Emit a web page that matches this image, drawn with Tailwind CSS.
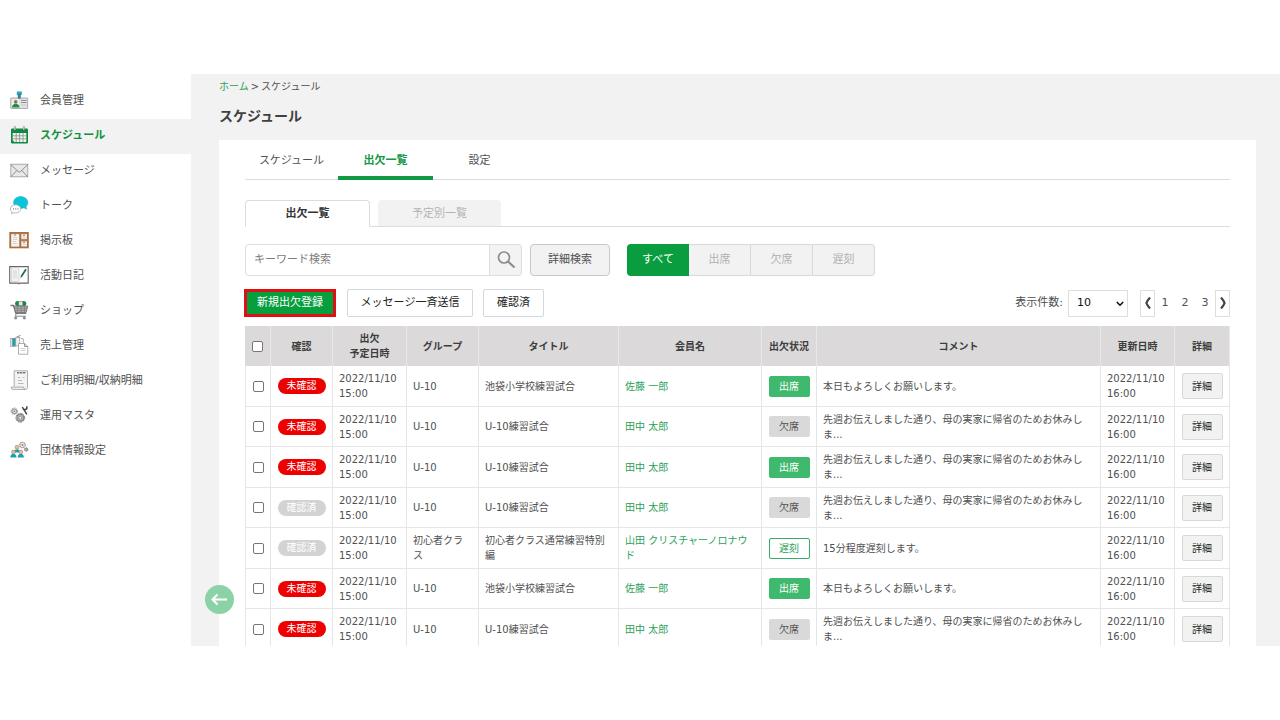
<!DOCTYPE html>
<html lang="ja">
<head>
    <meta charset="UTF-8">
    <meta name="viewport" content="width=device-width, initial-scale=1">
    <title>スケジュール</title>
    <script src="https://cdn.jsdelivr.net/npm/@tailwindcss/browser@4"></script>
    <style>
        body {
            font-family: 'DejaVu Sans', 'Noto Sans CJK JP', sans-serif;
        }
    </style>
</head>
<body class="bg-white text-[#505050]">

<div class="flex h-screen overflow-hidden py-[74px]">

    <!-- Sidebar -->
    <nav class="w-[191px] shrink-0 pt-[10px] text-[11px] [&_svg]:mb-1">
        <a href="#" class="flex h-[35px] items-center gap-[11px] pl-[9px]">
            <svg class="size-5" viewBox="0 0 20 20">
                <rect x="1.7" y="8" width="17" height="10.5" rx=".6" fill="#e2e2e2" stroke="#999" stroke-width=".8"/>
                <rect x="3.2" y="9.5" width="7" height="8" fill="#f6f1e4"/>
                <circle cx="6.7" cy="11.800" r="1.9" fill="#8b7660"/>
                <path d="M3 17.500c0-5 7.500-5 7.500 0z" fill="#14904a"/>
                <path d="M12 10.5h5.500M12 12.500h5.500" stroke="#888" stroke-width=".9"/>
                <path d="M12 15h5.500" stroke="#bbb" stroke-width=".7"/>
                <rect x="7.800" y="1.500" width="5" height="3.500" fill="#22a7c0"/>
                <rect x="8.800" y="4" width="3" height="4.600" fill="#3b7d9a"/>
            </svg>
            会員管理
        </a>
        <a href="#" class="flex h-[35px] items-center gap-[11px] bg-[#f2f2f2] pl-[9px] font-bold text-[#0b9140]">
            <svg class="size-5" viewBox="0 0 20 20">
                <rect x="2" y="3.500" width="17" height="15" rx="1.2" fill="#0f8a43"/>
                <path d="M5.800 1.500v3.500M14.800 1.500v3.500" stroke="#777" stroke-width="1.800"/>
                <path d="M5.800 2v3M14.800 2v3" stroke="#fff" stroke-width=".7"/>
                <path d="M3.700 8h13.600v9H5.500l-1.800-1.800z" fill="#f3f3f3"/>
                <path d="M3.700 10.800h13.600M3.700 13.800h13.600M7.200 8v9M10.600 8v9M14 8v9" stroke="#7c8f84" stroke-width=".8"/>
            </svg>
            スケジュール
        </a>
        <a href="#" class="flex h-[35px] items-center gap-[11px] pl-[9px]">
            <svg class="size-5" viewBox="0 0 20 20" fill="none" stroke="#999" stroke-width=".8">
                <rect x="1.8" y="4.2" width="17" height="12.6" fill="#e8e8e8"/>
                <path d="M1.8 4.5l7.2 7q1.3 1 2.6 0l7.2-7M2 16.7l5.8-6.3M18.6 16.7l-5.8-6.3" stroke="#777"/>
            </svg>
            メッセージ
        </a>
        <a href="#" class="flex h-[35px] items-center gap-[11px] pl-[9px]">
            <svg class="size-5" viewBox="0 0 20 20">
                <path d="M11.7 1.500c4 0 7.200 2.600 7.200 6 0 1.800-.8 3.200-1.800 4.200l.8 2.500-3-1.200c-5 1.600-10.400-1-10.400-5.500 0-3.400 3.200-6 7.200-6z" fill="#08c5dc" stroke="#3aa4b4" stroke-width=".4"/>
                <path d="M6.500 9.800c3 0 5.300 1.800 5.300 4.100s-2.300 4.100-5.300 4.100c-.700 0-1.300-.1-1.900-.3l-2 1.100.4-2c-1-.8-1.600-1.700-1.600-2.900 0-2.300 2.200-4.100 5.100-4.100z" fill="#fff" stroke="#999" stroke-width=".7"/>
                <path d="M4 13.900h1M6.200 13.900h1M8.400 13.900h1" stroke="#666" stroke-width="1"/>
            </svg>
            トーク
        </a>
        <a href="#" class="flex h-[35px] items-center gap-[11px] pl-[9px]">
            <svg class="size-5" viewBox="0 0 20 20">
                <rect x=".3" y="2" width="19.500" height="16.300" fill="#aa7243"/>
                <rect x="2" y="3.800" width="16" height="12.800" fill="#c9a27c"/>
                <path d="M2.300 4.200h7.700v12.200H2.300zM12.500 4.200h5.400v4.600h-5.400zM12.500 11.500h5.400v4.800h-5.400z" fill="#f7f4f0"/>
                <path d="M11.300 3.500v13.500M11.300 10.200h7" stroke="#aa7243" stroke-width="1.300"/>
                <path d="M4 7.500h4M4 9.500h4M4 11.500h3M4 13.500h4M13.500 7h3.400M13.500 14.300h3.400" stroke="#bbb" stroke-width=".6"/>
                <circle cx="6" cy="5" r=".7" fill="#555"/><circle cx="15" cy="5.200" r=".7" fill="#555"/><circle cx="15" cy="12.300" r=".7" fill="#555"/>
            </svg>
            掲示板
        </a>
        <a href="#" class="flex h-[35px] items-center gap-[11px] pl-[9px]">
            <svg class="size-5" viewBox="0 0 20 20">
                <path d="M.7 1.600h18.500v16.500h-8.200l-1 .7-1-.7H.7z" fill="#fff" stroke="#6e6460" stroke-width="1.100"/>
                <path d="M2.500 2.500h6q1.500.5 1.500 2v13.500q-1-1.300-3-1.300H2.500z" fill="#f1f1f1" stroke="#bbb" stroke-width=".5"/>
                <path d="M4 6h4M4 8h4M4 10h4M4 12h4" stroke="#ccc" stroke-width=".7"/>
                <path d="M17 4.200l-4.700 7.300" stroke="#1c6b4a" stroke-width="1.700"/>
                <path d="M12.500 11.200l-.8 1.600" stroke="#333" stroke-width=".8"/>
            </svg>
            活動日記
        </a>
        <a href="#" class="flex h-[35px] items-center gap-[11px] pl-[9px]">
            <svg class="size-5" viewBox="0 0 20 20" fill="none">
                <circle cx="8.700" cy="3.500" r="2.600" fill="#158a4c"/><circle cx="14.700" cy="3.500" r="2.600" fill="#158a4c"/>
                <rect x="9.800" y="1.500" width="4" height="4" fill="#e8e4d8" stroke="#777" stroke-width=".5"/>
                <path d="M1.500 5.500h3l2.300 7.800h10.400" stroke="#777" stroke-width="1.300"/>
                <path d="M4.800 6h14l-1.600 6.500H6.600z" fill="#aaa" stroke="#777" stroke-width=".9"/>
                <path d="M6 8.200h12M6.500 10.400h11M8.500 6v6.500M12 6v6.500M15.500 6v6.500" stroke="#777" stroke-width=".6"/>
                <path d="M7.500 13.500l-1.300 2.700h10.500" stroke="#888" stroke-width="1"/>
                <circle cx="6.700" cy="18" r="1.100" fill="#999" stroke="#666" stroke-width=".6"/><circle cx="15.300" cy="18" r="1.100" fill="#999" stroke="#666" stroke-width=".6"/>
            </svg>
            ショップ
        </a>
        <a href="#" class="flex h-[35px] items-center gap-[11px] pl-[9px]">
            <svg class="size-5" viewBox="0 0 20 20">
                <rect x="1.500" y="3.500" width="4.800" height="8" fill="#ddd" stroke="#999" stroke-width=".6"/>
                <rect x="3.300" y="3.200" width="3" height="8" fill="#1f9fae"/>
                <rect x="6.800" y="2.500" width="4" height="8.500" fill="#f2f2f2" stroke="#888" stroke-width=".6"/>
                <path d="M7.500 2L11.500.5" stroke="#888" stroke-width="1"/>
                <path d="M11.800 3.500l2.500.4v4" fill="none" stroke="#999" stroke-width=".8"/>
                <path d="M9.500 8.500h6l3.300 3v7.700H9.500z" fill="#fff" stroke="#999" stroke-width=".8"/>
                <path d="M15.500 8.500v3h3.300" fill="none" stroke="#777" stroke-width=".8"/>
                <path d="M11.500 13.500h5M11.500 15.500h5" stroke="#bbb" stroke-width=".7"/>
            </svg>
            売上管理
        </a>
        <a href="#" class="flex h-[35px] items-center gap-[11px] pl-[9px]">
            <svg class="size-5" viewBox="0 0 20 20" fill="none" stroke="#999" stroke-width=".8">
                <path d="M5.200 16.500V.8h13.300v16.800q-.3 1.800-2 1.800H4q-1.800 0-1.800-2.300h12.300q0 2.300 2 2.300" fill="#f4f4f4"/>
                <path d="M8 2.800h8.500" stroke="#777" stroke-width="1.600" stroke-dasharray="2.400 .6"/>
                <path d="M9 7.500h2M9 10.500h4M9 13.500h5.500M13.500 7.500h2" stroke="#aaa"/>
            </svg>
            ご利用明細/収納明細
        </a>
        <a href="#" class="flex h-[35px] items-center gap-[11px] pl-[9px]">
            <svg class="size-5" viewBox="0 0 20 20" fill="none">
                <circle cx="5.300" cy="6.300" r="2.400" fill="#ddd" stroke="#888" stroke-width="1"/>
                <circle cx="5.300" cy="6.300" r="3.300" stroke="#999" stroke-width=".9" stroke-dasharray="1.400 .7"/>
                <circle cx="5.300" cy="6.300" r=".8" fill="#777"/>
                <circle cx="11.300" cy="12.800" r="3.400" fill="#bbb" stroke="#888" stroke-width="1.300"/>
                <circle cx="11.300" cy="12.800" r="4.400" stroke="#777" stroke-width="1" stroke-dasharray="1.700 .8"/>
                <circle cx="11.300" cy="12.800" r="1.400" fill="#fff" stroke="#666" stroke-width=".6"/>
                <path d="M13.300 2.200l1.700 2.600 2.700-.8.200-2.800M15.200 4.800l2.600 4.500" stroke="#444" stroke-width="1.500"/>
            </svg>
            運用マスタ
        </a>
        <a href="#" class="flex h-[35px] items-center gap-[11px] pl-[9px]">
            <svg class="size-5" viewBox="0 0 20 20">
                <circle cx="13.500" cy="5" r="2.700" fill="#eee" stroke="#999" stroke-width="1.300" stroke-dasharray="1.500 .5"/>
                <circle cx="13.500" cy="5" r="1" fill="#888"/>
                <circle cx="17.200" cy="9.500" r="1.700" fill="#aaa" stroke="#777" stroke-width="1" stroke-dasharray="1.200 .5"/>
                <path d="M4.800 12.500c0-4.500 6.500-4.500 6.500 0z" fill="#1aa0ae"/>
                <circle cx="8" cy="7.200" r="2" fill="#e2bfa0" stroke="#8b7660" stroke-width=".5"/>
                <path d="M1.300 17.600c0-5 6.200-5 6.200 0zM8.700 17.600c0-5 6.200-5 6.200 0z" fill="#1aa0ae"/>
                <circle cx="4.400" cy="12" r="1.900" fill="#e2bfa0" stroke="#8b7660" stroke-width=".5"/>
                <circle cx="11.800" cy="12" r="1.900" fill="#e2bfa0" stroke="#8b7660" stroke-width=".5"/>
            </svg>
            団体情報設定
        </a>
    </nav>

    <!-- Main -->
    <main class="relative min-w-0 grow overflow-hidden bg-[#f2f2f2] pl-7 pr-6">
        <div class="flex h-[66px] flex-col gap-3 pt-[6px]">
            <div class="flex gap-[2px] text-[10px] leading-[14px]">
                <a href="#" class="text-[#2a9f58]">ホーム</a>
                <span>&gt;</span>
                <span>スケジュール</span>
            </div>
            <h1 class="text-[14px] font-bold leading-5 text-[#404040]">スケジュール</h1>
        </div>

        <section class="min-h-full bg-white px-[26px]">
            <!-- Tabs -->
            <div class="flex h-10 border-b border-[#dcdcdc] text-[11px]">
                <a href="#" class="flex w-[93px] items-center justify-center pt-1">スケジュール</a>
                <a href="#" class="flex h-10 w-[95px] items-center justify-center border-b-4 border-[#129944] pt-[6px] font-bold text-[#129944]">出欠一覧</a>
                <a href="#" class="flex w-[93px] items-center justify-center pt-1">設定</a>
            </div>

            <!-- Sub tabs -->
            <div class="mt-5 flex h-[27px] gap-2 border-b border-[#dcdcdc] text-[11px]">
                <a href="#" class="flex h-[27px] w-[125px] items-center justify-center rounded-t-sm border border-[#dcdcdc] border-b-white bg-white pt-[2px] font-bold text-[#333]">出欠一覧</a>
                <a href="#" class="flex w-[123px] items-center justify-center rounded-t-sm bg-[#f2f2f2] pt-[2px] text-[#b3b3b3]">予定別一覧</a>
            </div>

            <!-- Search -->
            <div class="mt-[17px] flex h-8">
                <form class="flex w-[277px]" onsubmit="return false">
                    <input type="text" aria-label="キーワード検索" placeholder="キーワード検索" class="min-w-0 grow rounded-l-sm border border-[#dedede] px-2 text-[11px] placeholder:text-[#7d7d7d]">
                    <button type="submit" aria-label="検索" class="flex w-8 items-center justify-center rounded-r-sm border border-l-0 border-[#dedede] bg-[#f4f3f4]">
                        <svg class="size-5" viewBox="0 0 20 20" fill="none" stroke="#8c8c8c" stroke-width="1.700">
                            <circle cx="8" cy="7.500" r="5.500"/>
                            <path d="M12 11.500l6.500 6" stroke-width="2.200"/>
                        </svg>
                    </button>
                </form>
                <button type="button" class="ml-2 w-20 rounded-sm border border-[#c8c8c8] bg-[#f3f2f3] text-[11px]">詳細検索</button>
                <div class="ml-[17px] flex text-[11px] text-[#b0b0b0]">
                    <button type="button" class="w-[62px] rounded-l-sm bg-[#0a9d3f] text-white">すべて</button>
                    <button type="button" class="w-[62px] border border-l-0 border-[#dad9da] bg-[#f3f2f3]">出席</button>
                    <button type="button" class="w-[62px] border border-l-0 border-[#dad9da] bg-[#f3f2f3]">欠席</button>
                    <button type="button" class="w-[62px] rounded-r-sm border border-l-0 border-[#dad9da] bg-[#f3f2f3]">遅刻</button>
                </div>
            </div>

            <!-- Actions and paging -->
            <div class="mt-3 flex h-[30px] items-center text-[11px]">
                <button type="button" class="-ml-px h-7 w-[92px] border-3 border-[#df0f13] bg-[#079e3e] text-white">新規出欠登録</button>
                <button type="button" class="ml-[11px] h-7 w-[126px] rounded-xs border border-[#d5d8db] text-[#222]">メッセージ一斉送信</button>
                <button type="button" class="ml-[10px] h-7 w-[61px] rounded-xs border border-[#d5d8db] text-[#222]">確認済</button>

                <label for="pageSize" class="ml-auto mr-[5px]">表示件数:</label>
                <div class="relative">
                    <select id="pageSize" class="h-[27px] w-[60px] appearance-none border border-[#dedede] bg-white pl-2 text-[#111]">
                        <option>10</option>
                        <option>20</option>
                        <option>50</option>
                    </select>
                    <svg class="pointer-events-none absolute right-1 top-[10px] size-2" viewBox="0 0 8 8" fill="none" stroke="#111" stroke-width="1.600"><path d="M.8 2l3.200 3.200L7.200 2"/></svg>
                </div>
                <div class="ml-3 flex h-[27px] items-center">
                    <button type="button" aria-label="前へ" class="flex h-[27px] w-[15px] items-center justify-center border border-[#dedede]">
                        <svg class="h-3 w-2" viewBox="0 0 8 12" fill="none" stroke="#444" stroke-width="2.200"><path d="M6 .5Q3 4 2.400 6 3 8 6 11.500"/></svg>
                    </button>
                    <a href="#" class="w-5 text-center">1</a>
                    <a href="#" class="w-5 text-center">2</a>
                    <a href="#" class="w-5 text-center">3</a>
                    <button type="button" aria-label="次へ" class="flex h-[27px] w-[15px] items-center justify-center border border-[#dedede]">
                        <svg class="h-3 w-2" viewBox="0 0 8 12" fill="none" stroke="#444" stroke-width="2.200"><path d="M2 .5Q5 4 5.600 6 5 8 2 11.500"/></svg>
                    </button>
                </div>
            </div>

            <!-- Attendance table -->
            <table class="mt-2 w-full table-fixed border-separate border-spacing-0 text-[10px] leading-[15px]">
                <colgroup>
                    <col class="w-[26px]">
                    <col class="w-[62px]">
                    <col class="w-[74px]">
                    <col class="w-[72px]">
                    <col class="w-[140px]">
                    <col class="w-[143px]">
                    <col class="w-[55px]">
                    <col>
                    <col class="w-[74px]">
                    <col class="w-[55px]">
                </colgroup>
                <thead>
                    <tr class="h-10 bg-[#dbd9da] text-[#3d3d3d] [&>th]:border-r [&>th]:border-[#e8e8e8] [&>th]:p-0">
                        <th><input type="checkbox" aria-label="すべて選択" class="block size-[11px] mx-auto appearance-none rounded-xs border border-[#767676] bg-white"></th>
                        <th>確認</th>
                        <th>出欠<br>予定日時</th>
                        <th>グループ</th>
                        <th>タイトル</th>
                        <th>会員名</th>
                        <th>出欠状況</th>
                        <th>コメント</th>
                        <th>更新日時</th>
                        <th>詳細</th>
                    </tr>
                </thead>
                <tbody id="attendanceRows"></tbody>
            </table>
        </section>

        <button type="button" aria-label="戻る" class="absolute bottom-8 left-[14px] flex size-[29px] items-center justify-center rounded-full bg-[#8bd3a6]">
            <svg class="size-[17px]" viewBox="0 0 17 17" fill="none" stroke="#fff" stroke-width="2"><path d="M1.500 8.500H16M6.500 3.500L1.500 8.500l5 5"/></svg>
        </button>
    </main>
</div>

<script>
    const absent = '先週お伝えしました通り、母の実家に帰省のためお休みしま...';
    const present = '本日もよろしくお願いします。';

    const rows = [
        { checked: false, group: 'U-10', title: '池袋小学校練習試合', name: '佐藤 一郎', status: '出席', comment: present },
        { checked: false, group: 'U-10', title: 'U-10練習試合', name: '田中 太郎', status: '欠席', comment: absent },
        { checked: false, group: 'U-10', title: 'U-10練習試合', name: '田中 太郎', status: '出席', comment: absent },
        { checked: true, group: 'U-10', title: 'U-10練習試合', name: '田中 太郎', status: '欠席', comment: absent },
        { checked: true, group: '初心者クラス', title: '初心者クラス通常練習特別編', name: '山田 クリスチャーノロナウド', status: '遅刻', comment: '15分程度遅刻します。' },
        { checked: false, group: 'U-10', title: '池袋小学校練習試合', name: '佐藤 一郎', status: '出席', comment: present },
        { checked: false, group: 'U-10', title: 'U-10練習試合', name: '田中 太郎', status: '欠席', comment: absent },
    ];

    const statusClass = {
        '出席': 'border-[#3fb96d] bg-[#3fb96d] text-white',
        '欠席': 'border-[#d9d9d9] bg-[#d9d9d9] text-[#555]',
        '遅刻': 'border-[#3aab68] bg-white text-[#2a9f58]',
    };

    document.getElementById('attendanceRows').innerHTML = rows.map(row => `
        <tr class="odd:h-[41px] even:h-10 [&>td]:border-r [&>td]:border-b [&>td]:border-[#e6e6e6] [&>td]:px-[6px] [&>td]:py-0 [&>td:first-child]:border-l">
            <td><input type="checkbox" aria-label="${row.name}" class="block size-[11px] mx-auto appearance-none rounded-xs border border-[#767676] bg-white"></td>
            <td><span class="mx-auto block h-4 w-12 rounded-full text-center ${row.checked ? 'bg-[#d3d3d3] text-white' : 'bg-[#ee0000] text-white'}">${row.checked ? '確認済' : '未確認'}</span></td>
            <td>2022/11/10<br>15:00</td>
            <td>${row.group}</td>
            <td>${row.title}</td>
            <td><a href="#" class="text-[#2a9f58]">${row.name}</a></td>
            <td><span class="mx-auto block h-[21px] w-[41px] rounded-xs border pt-[2px] text-center ${statusClass[row.status]}">${row.status}</span></td>
            <td>${row.comment}</td>
            <td>2022/11/10<br>16:00</td>
            <td><button type="button" class="mx-auto block h-[26px] w-[41px] rounded-xs border border-[#d8d8d8] bg-[#f2f2f2] text-[#222]">詳細</button></td>
        </tr>
    `).join('');
</script>

</body>
</html>
